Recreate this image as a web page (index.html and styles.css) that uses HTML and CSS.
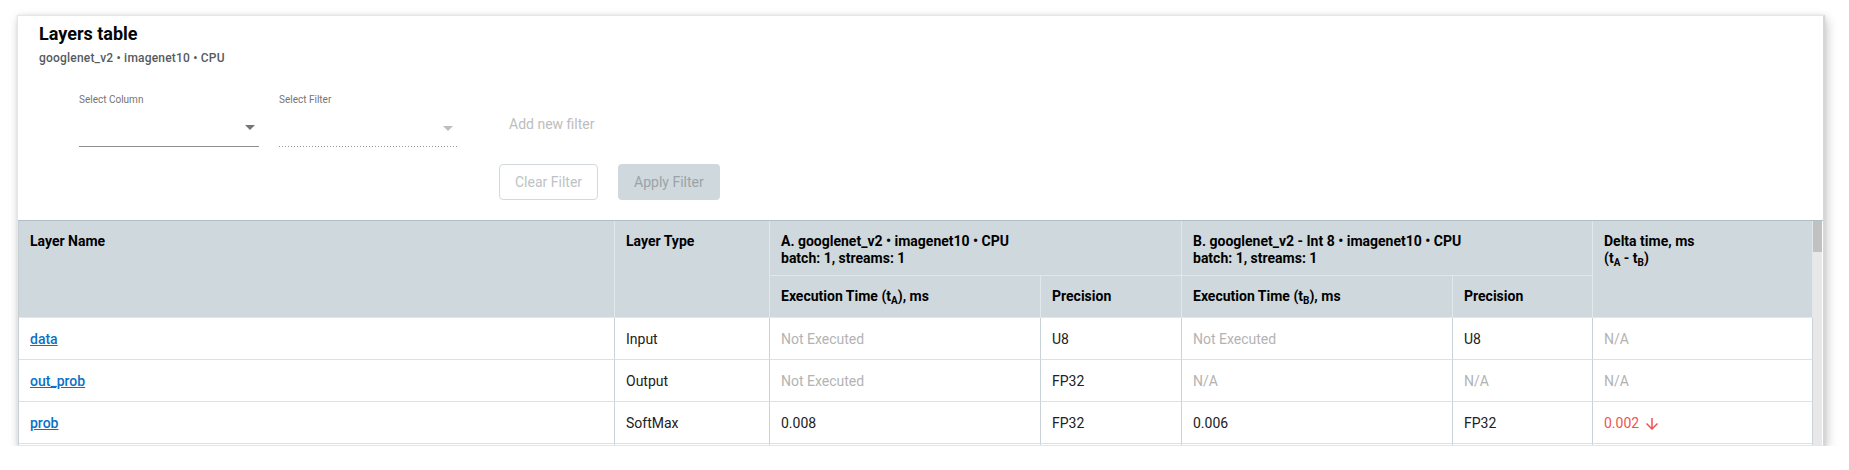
FILE: index.html
```html
<!DOCTYPE html>
<html lang="en">
<head>
<meta charset="utf-8">
<title>Layers table</title>
<link rel="stylesheet" href="styles.css">
</head>
<body>
<section class="card">
  <header class="card-head">
    <h1 class="title">Layers table</h1>
    <p class="subtitle">googlenet_v2 • imagenet10 • CPU</p>
  </header>

  <div class="filters">
    <div class="field">
      <label class="field-label">Select Column</label>
      <div class="select"><span class="caret"></span></div>
    </div>
    <div class="field">
      <label class="field-label">Select Filter</label>
      <div class="select select-disabled"><span class="caret caret-disabled"></span></div>
    </div>
    <button class="add-filter" type="button" disabled>Add new filter</button>
    <div class="actions">
      <button class="btn btn-outline" type="button" disabled>Clear Filter</button>
      <button class="btn btn-filled" type="button" disabled>Apply Filter</button>
    </div>
  </div>

  <div class="table-area">
    <div class="table-scroll">
      <table class="layers">
        <colgroup>
          <col class="c-name">
          <col class="c-type">
          <col class="c-exec">
          <col class="c-prec-a">
          <col class="c-exec">
          <col class="c-prec-b">
          <col class="c-delta">
        </colgroup>
        <thead>
          <tr class="head-top">
            <th rowspan="2" class="th-span">Layer Name</th>
            <th rowspan="2" class="th-span">Layer Type</th>
            <th colspan="2" class="th-group">A. googlenet_v2 • imagenet10 • CPU<br>batch: 1, streams: 1</th>
            <th colspan="2" class="th-group">B. googlenet_v2 - Int 8 • imagenet10 • CPU<br>batch: 1, streams: 1</th>
            <th rowspan="2" class="th-span th-last">Delta time, ms<br>(t<sub>A</sub> - t<sub>B</sub>)</th>
          </tr>
          <tr class="head-sub">
            <th class="th-sub">Execution Time (t<sub>A</sub>), ms</th>
            <th class="th-sub">Precision</th>
            <th class="th-sub">Execution Time (t<sub>B</sub>), ms</th>
            <th class="th-sub">Precision</th>
          </tr>
        </thead>
        <tbody>
          <tr>
            <td><a class="layer-link" href="#data">data</a></td>
            <td>Input</td>
            <td class="muted">Not Executed</td>
            <td>U8</td>
            <td class="muted">Not Executed</td>
            <td>U8</td>
            <td class="muted td-last">N/A</td>
          </tr>
          <tr>
            <td><a class="layer-link" href="#out_prob">out_prob</a></td>
            <td>Output</td>
            <td class="muted">Not Executed</td>
            <td>FP32</td>
            <td class="muted">N/A</td>
            <td class="muted">N/A</td>
            <td class="muted td-last">N/A</td>
          </tr>
          <tr>
            <td><a class="layer-link" href="#prob">prob</a></td>
            <td>SoftMax</td>
            <td>0.008</td>
            <td>FP32</td>
            <td>0.006</td>
            <td>FP32</td>
            <td class="delta-down td-last">0.002<svg class="arrow" viewBox="4 4 16 16" width="12" height="12" aria-hidden="true"><path d="M20 12l-1.41-1.41L13 16.17V4h-2v12.17l-5.58-5.59L4 12l8 8 8-8z" fill="currentColor"/></svg></td>
          </tr>
          <tr class="row-more" aria-hidden="true">
            <td></td>
            <td></td>
            <td></td>
            <td></td>
            <td></td>
            <td></td>
            <td class="td-last"></td>
          </tr>
        </tbody>
      </table>
    </div>
    <div class="scrollbar"><div class="thumb"></div></div>
  </div>
</section>
</body>
</html>
```

FILE: styles.css
```css
* {
  box-sizing: border-box;
}

html,
body {
  margin: 0;
  background: #ffffff;
}

body {
  padding: 15px 24px 0 17px;
  font-family: Roboto, "Liberation Sans", Arial, sans-serif;
  color: #212121;
}

.card {
  width: 1808px;
  height: 431px;
  display: flex;
  flex-direction: column;
  background: #ffffff;
  border: 1px solid #e6e6e6;
  border-right: 2px solid #d6d6d6;
  box-shadow: 2px 4px 10px rgba(0, 0, 0, 0.22), 0 0 3px rgba(0, 0, 0, 0.08);
}

/* ---------- heading ---------- */
.card-head {
  padding: 7px 21px 0;
}

.title {
  margin: 0;
  font-size: 18px;
  line-height: 21px;
  font-weight: 700;
  color: #050505;
}

.subtitle {
  margin: 7px 0 0;
  font-size: 12px;
  line-height: 14px;
  font-weight: 500;
  letter-spacing: 0.2px;
  color: #555b5e;
}

/* ---------- filters ---------- */
.filters {
  display: grid;
  grid-template-columns: 180px 178px auto;
  justify-content: start;
  justify-items: start;
  align-items: start;
  column-gap: 20px;
  row-gap: 17px;
  padding: 29px 0 0 61px;
}

.field {
  justify-self: stretch;
}

.field-label {
  display: block;
  font-size: 10px;
  line-height: 12px;
  color: #757575;
}

.select {
  height: 41px;
  padding: 3px 4px 0 0;
  display: flex;
  align-items: center;
  justify-content: flex-end;
  border-bottom: 1px solid #8f8f8f;
}

.select-disabled {
  border-bottom: 0;
  background-image: linear-gradient(to right, rgba(0, 0, 0, 0.42) 33%, transparent 0%);
  background-size: 3px 1px;
  background-repeat: repeat-x;
  background-position: left bottom;
}

.caret {
  width: 0;
  height: 0;
  border-left: 5px solid transparent;
  border-right: 5px solid transparent;
  border-top: 5px solid #757575;
}

.caret-disabled {
  border-top-color: #bdbdbd;
}

.add-filter {
  justify-self: start;
  margin: 12px 0 0 22px;
  height: 36px;
  padding: 0 10px;
  border: 0;
  background: none;
  font-family: inherit;
  font-size: 14px;
  line-height: 36px;
  color: #bdbdbd;
}

.actions {
  grid-column: 3;
  display: flex;
  gap: 20px;
  margin-left: 22px;
}

.btn {
  height: 36px;
  padding: 0 15px;
  border: 1px solid transparent;
  border-radius: 4px;
  font-family: inherit;
  font-size: 14px;
  line-height: 34px;
}

.btn-outline {
  background: #ffffff;
  border-color: #d3dadd;
  color: #bcc3c6;
}

.btn-filled {
  background: #cfd8dc;
  color: #9aa4a8;
}

/* ---------- table ---------- */
.table-area {
  flex: 1;
  min-height: 0;
  margin-top: 20px;
  display: flex;
  border-top: 1px solid #b0bec5;
}

.table-scroll {
  flex: 1;
  min-width: 0;
  overflow: hidden;
  border-left: 1px solid #c5d0d4;
}

.scrollbar {
  width: 10px;
  background: #e8e8e8;
  border-right: 1px solid #ffffff;
}

.thumb {
  height: 31px;
  background: #c1c1c1;
}

.layers {
  width: 1794px;
  table-layout: fixed;
  border-collapse: separate;
  border-spacing: 0;
  font-size: 14px;
}

.c-name { width: 596px; }
.c-type { width: 155px; }
.c-exec { width: 271px; }
.c-prec-a { width: 141px; }
.c-prec-b { width: 140px; }
.c-delta { width: 220px; }

.head-top { height: 55px; }
.head-sub { height: 42px; }

.layers th {
  background: #cfd8dc;
  color: #000000;
  font-weight: 700;
  text-align: left;
  line-height: 17px;
  border-right: 1px solid #e2e7e9;
  border-bottom: 1px solid #e2e7e9;
}

.th-span,
.th-group {
  vertical-align: top;
  padding: 12px 11px 0;
}

.th-span,
.th-sub {
  border-bottom-color: #b8c4c9;
}

.th-sub {
  vertical-align: middle;
  padding: 0 11px;
}

.th-last,
.td-last {
  border-right: 0;
}

.layers sub {
  font-size: 10px;
  line-height: 0;
  vertical-align: -3px;
}

.layers tbody tr {
  height: 42px;
}

.layers td {
  padding: 0 11px;
  line-height: 20px;
  vertical-align: middle;
  border-right: 1px solid #c9d3d7;
  border-bottom: 1px solid #e0e0e0;
  white-space: nowrap;
}

.layer-link {
  color: #0a72c6;
  font-weight: 500;
  text-decoration: underline;
}

.muted {
  color: #b3b3b3;
}

.delta-down {
  color: #ef5350;
}

.arrow {
  margin-left: 7px;
  vertical-align: -2px;
}
```
